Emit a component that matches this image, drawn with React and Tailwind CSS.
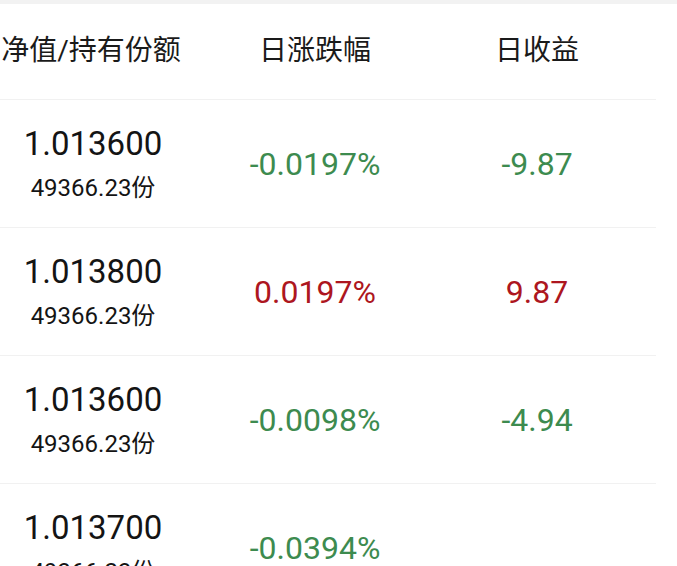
import React from "react";

const rows = [
    { nav: "1.013600", shares: "49366.23份", change: "-0.0197%", income: "-9.87", up: false },
    { nav: "1.013800", shares: "49366.23份", change: "0.0197%", income: "9.87", up: true },
    { nav: "1.013600", shares: "49366.23份", change: "-0.0098%", income: "-4.94", up: false },
    { nav: "1.013700", shares: "49366.23份", change: "-0.0394%", income: "", up: false },
];

export default function App() {
    return (
        <div
            className="w-[677px] h-[566px] overflow-hidden bg-white"
            style={{ fontFamily: 'Roboto, "Noto Sans CJK SC", sans-serif' }}
        >
            <div className="h-[4px] bg-[#f2f2f2]" />
            <div className="w-[656px]">
                {/* header */}
                <div className="h-[96px] grid grid-cols-[186px_258px_186px] items-center border-b border-[#f1f1f1] text-[28px] text-[#1a1a1a]">
                    <div className="flex justify-center whitespace-nowrap pb-[2px] -ml-[4px]">净值/持有份额</div>
                    <div className="flex justify-center whitespace-nowrap pb-[2px]">日涨跌幅</div>
                    <div className="flex justify-center whitespace-nowrap pb-[2px]">日收益</div>
                </div>

                {rows.map((row, i) => {
                    const color = row.up ? "text-[#ad1620]" : "text-[#3d8b4f]";
                    return (
                        <div
                            key={i}
                            className="h-[128px] grid grid-cols-[186px_258px_186px] items-center border-b border-[#f1f1f1]"
                        >
                            <div className="flex flex-col items-center text-[#141414]">
                                <div className="text-[33px] leading-[38px]">{row.nav}</div>
                                <div className="text-[24px] leading-[30px] mt-[10px]">{row.shares}</div>
                            </div>
                            <div className={`flex justify-center text-[32px] ${color}`}>{row.change}</div>
                            <div className={`flex justify-center text-[32px] ${color}`}>{row.income}</div>
                        </div>
                    );
                })}
            </div>
        </div>
    );
}
